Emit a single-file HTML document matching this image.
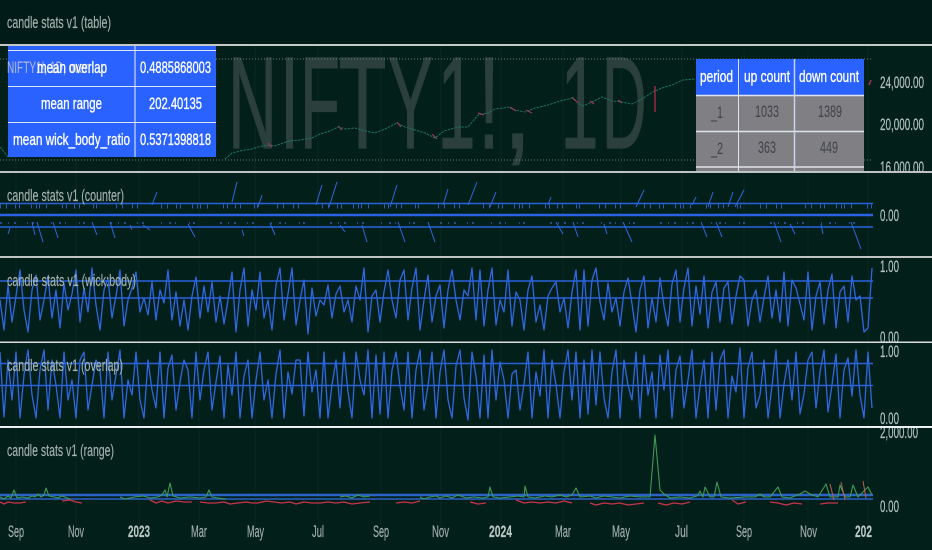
<!DOCTYPE html>
<html><head><meta charset="utf-8"><style>
html,body{margin:0;padding:0;background:#021d19;width:932px;height:550px;overflow:hidden}
svg{display:block}
text{font-family:"Liberation Sans",sans-serif;font-size:16.5px}
.t{fill:#a6b2ae;stroke:#a6b2ae;stroke-width:.15}
.a{fill:#b4c3bf;stroke:#b4c3bf;stroke-width:.2}
.w{fill:#fff;stroke:#fff;stroke-width:.35}
.g{fill:#3f4247}
.b{fill:none;stroke:#2a62dc;stroke-width:1.6}
.c{fill:none;stroke:#2f68e0;stroke-width:1.3;stroke-linejoin:round}
.v{stroke:#0a2722;stroke-width:1}
.m text{font-size:131px;fill:#2b3f3c;stroke:#2b3f3c;stroke-width:1.2}
</style></head><body>
<svg width="932" height="550" viewBox="0 0 932 550" xmlns="http://www.w3.org/2000/svg">
<rect width="932" height="550" fill="#021f1a"/>
<path class="v" d="M16 46V530M76 46V530M139 46V530M199 46V530M255 46V530M318 46V530M381 46V530M441 46V530M501 46V530M563 46V530M621 46V530M682 46V530M744 46V530M808 46V530M868 46V530"/>

<!-- main pane -->
<g class="m">
<text x="228" y="148" textLength="49" lengthAdjust="spacingAndGlyphs">N</text>
<text x="280" y="148" textLength="19" lengthAdjust="spacingAndGlyphs">I</text>
<text x="300" y="148" textLength="40" lengthAdjust="spacingAndGlyphs">F</text>
<text x="338.5" y="148" textLength="48" lengthAdjust="spacingAndGlyphs">T</text>
<text x="388" y="148" textLength="45" lengthAdjust="spacingAndGlyphs">Y</text>
<text x="437.5" y="148" textLength="38" lengthAdjust="spacingAndGlyphs">1</text>
<text x="478" y="148" textLength="22" lengthAdjust="spacingAndGlyphs">!</text>
<text x="503" y="148" textLength="29" lengthAdjust="spacingAndGlyphs">,</text>
<text x="560.5" y="148" textLength="38" lengthAdjust="spacingAndGlyphs">1</text>
<text x="602" y="148" textLength="44.5" lengthAdjust="spacingAndGlyphs">D</text>
</g>
<path d="M0 59H873M0 160H873" stroke="#6a7e79" stroke-width="1" stroke-dasharray="1 2" fill="none"/>
<path d="M0 147L8 157M225 159L232 153 240 151 245 150 252 149 258 147 268 145 275 146 283 143 290 141 300 140 312 138 320 134 330 131 338 127 346 129 355 128 365 131 375 133 385 129 397 123 405 127 415 130 425 133 435 138 444 131 458 127 468 127 478 115 488 113 495 109 503 108 508 107 515 110 525 112 535 108 548 105 560 101 572 98 578 103 583 106 592 102 602 97 612 101 622 102 632 104 642 99 653 92 662 88 672 85 683 80 695 79" fill="none" stroke="#1f7160" stroke-width="1" stroke-dasharray="2.5 1"/>
<path d="M268 143L272 147M338 126L342 130M397 122L401 127M432 134L437 139M478 113L484 115M510 107L516 111M526 110L532 113M572 97L578 103M590 101L594 104M618 100L622 103" fill="none" stroke="#9a3a50" stroke-width="1.2"/>
<path d="M655 86V112" stroke="#b02a48" stroke-width="1.3"/>
<path d="M869 85L871 80" stroke="#a03a50" stroke-width="1.5"/>

<!-- left table -->
<rect x="8" y="46" width="208" height="111" fill="#2962ff"/>
<path d="M8 50.5H216M8 86.5H216M8 122.5H216M135 46V157" stroke="#dbe5f7" stroke-width="1.1" fill="none"/>
<text x="7" y="73" textLength="81" lengthAdjust="spacingAndGlyphs" fill="#b4bcd0">NIFTY1!, 1D, over</text>
<text class="w" x="37" y="73" textLength="70" lengthAdjust="spacingAndGlyphs">mean overlap</text>
<text class="w" x="140" y="73" textLength="71" lengthAdjust="spacingAndGlyphs">0.4885868003</text>
<text class="w" x="41" y="109" textLength="61" lengthAdjust="spacingAndGlyphs">mean range</text>
<text class="w" x="149" y="109" textLength="53" lengthAdjust="spacingAndGlyphs">202.40135</text>
<text class="w" x="13" y="145" textLength="117" lengthAdjust="spacingAndGlyphs">mean wick_body_ratio</text>
<text class="w" x="140" y="145" textLength="71" lengthAdjust="spacingAndGlyphs">0.5371398818</text>

<!-- right table -->
<rect x="696" y="59" width="168" height="36" fill="#2962ff"/>
<rect x="696" y="95" width="168" height="77" fill="#808084"/>
<path d="M696 95.5H864M696 131.5H864M696 167H864" stroke="#dfe3ea" stroke-width="1.5" fill="none"/>
<path d="M738.5 59V172" stroke="#dde4f0" stroke-width="1"/>
<path d="M794.5 59V172" stroke="#c8d4ea" stroke-width="1.5"/>
<text class="w" x="700" y="82" textLength="33" lengthAdjust="spacingAndGlyphs">period</text>
<text class="w" x="744" y="82" textLength="46" lengthAdjust="spacingAndGlyphs">up count</text>
<text class="w" x="799" y="82" textLength="60" lengthAdjust="spacingAndGlyphs">down count</text>
<text class="g" x="711" y="118" textLength="12" lengthAdjust="spacingAndGlyphs">_1</text>
<text class="g" x="755" y="117" textLength="24" lengthAdjust="spacingAndGlyphs">1033</text>
<text class="g" x="818" y="117" textLength="24" lengthAdjust="spacingAndGlyphs">1389</text>
<text class="g" x="711" y="154" textLength="12" lengthAdjust="spacingAndGlyphs">_2</text>
<text class="g" x="758" y="153" textLength="18" lengthAdjust="spacingAndGlyphs">363</text>
<text class="g" x="820" y="153" textLength="18" lengthAdjust="spacingAndGlyphs">449</text>

<text class="a" x="880" y="88" textLength="44" lengthAdjust="spacingAndGlyphs">24,000.00</text>
<text class="a" x="880" y="130" textLength="44" lengthAdjust="spacingAndGlyphs">20,000.00</text>
<text class="a" x="880" y="173" textLength="44" lengthAdjust="spacingAndGlyphs">16,000.00</text>

<!-- counter pane -->
<rect y="172" width="932" height="85" fill="#021f1a"/>
<path class="v" d="M16 173V257M76 173V257M139 173V257M199 173V257M255 173V257M318 173V257M381 173V257M441 173V257M501 173V257M563 173V257M621 173V257M682 173V257M744 173V257M808 173V257M868 173V257"/>
<path d="M0 203.5H873M0 227H873" class="b"/>
<path d="M0 215H873" fill="none" stroke="#2a62e4" stroke-width="2.6"/>
<path d="M0 206.5H873" fill="none" stroke="#2f5cb4" stroke-width="4" stroke-dasharray="1 5 1 8 1 3 1 11 1 4 1 2 1 6 1 15 1 3 1 7 1 4 1 13 1 2 1 19 1 5 1 9 1 4 1 23"/>
<path d="M0 223H873" fill="none" stroke="#2f5cb4" stroke-width="1.4" stroke-dasharray="2 6 1 5 2 11 1 4 2 17 1 7 2 4 1 13 1 3 2 25"/>
<path class="c" style="stroke-width:1" d="M237 182L232 202M157 192L152 205M262 195L258 207M322 185L316 205M337 182L329 207M397 185L390 207M448 189L443 205M477 182L468 205M496 192L490 207M551 197L548 205M644 190L636 207M713 192L708 207M733 192L728 207M744 190L735 207M696 197L692 205M10 228L8 234M32 222L35 235M37 222L43 242M53 222L58 238M92 222L97 235M110 222L115 238M130 225L132 230M143 225L150 230M188 224L195 237M242 230L244 236M270 223L275 235M340 225L345 232M362 225L367 242M398 222L405 242M428 222L435 242M556 222L563 234M573 222L578 237M604 224L607 234M623 222L632 242M701 222L707 237M716 222L722 237M774 222L781 242M790 224L795 234M821 224L823 234M851 222L861 249"/>
<text class="a" x="880" y="221" textLength="19" lengthAdjust="spacingAndGlyphs">0.00</text>

<!-- wick pane -->
<path class="c" d="M0 300L4 330 8 285 12 322 16 296 20 270 24 310 28 332 32 290 36 275 40 320 44 300 48 276 52 318 56 290 60 328 64 283 68 310 72 294 76 270 80 322 84 288 88 312 92 268 96 305 100 330 104 290 108 278 112 318 116 296 120 270 124 326 128 300 132 288 136 272 140 312 144 298 148 315 152 282 156 320 160 290 164 303 168 270 172 320 176 292 180 326 184 300 188 330 192 296 196 277 200 318 204 286 208 312 212 282 216 322 220 296 224 324 228 300 232 272 236 332 240 290 244 268 248 326 252 290 256 310 260 272 264 318 268 300 272 330 276 285 280 268 284 320 288 294 292 268 296 325 300 300 304 280 308 334 312 288 316 316 320 300 324 305 328 285 332 318 336 294 340 286 344 312 348 300 352 322 356 286 360 300 364 268 368 332 372 296 376 290 380 322 384 292 388 270 392 300 396 318 400 280 404 270 408 320 412 288 416 268 420 330 424 300 428 275 432 322 436 296 440 285 444 328 448 290 452 270 456 300 460 320 464 290 468 296 472 268 476 320 480 270 484 326 488 290 492 268 496 325 500 300 504 312 508 270 512 326 516 292 520 300 524 330 528 290 532 276 536 322 540 305 544 330 548 296 552 288 556 282 560 312 564 298 568 328 572 292 576 270 580 330 584 270 588 326 592 280 596 268 600 302 604 320 608 283 612 312 616 298 620 326 624 292 628 278 632 304 636 332 640 290 644 276 648 328 652 298 656 322 660 278 664 306 668 326 672 284 676 270 680 322 684 288 688 268 692 326 696 286 700 314 704 276 708 328 712 292 716 282 720 322 724 288 728 282 732 324 736 296 740 276 744 280 748 326 752 300 756 290 760 322 764 298 768 276 772 318 776 290 780 322 784 272 788 326 792 280 796 288 800 304 804 320 808 272 812 330 816 296 820 282 824 324 828 290 832 274 836 328 840 292 844 286 848 322 852 276 856 300 860 296 864 332 868 328 872 268"/>
<path class="b" d="M0 281H873M0 298H873"/>
<text class="a" x="880" y="272" textLength="19" lengthAdjust="spacingAndGlyphs">1.00</text>
<text class="a" x="880" y="343" textLength="19" lengthAdjust="spacingAndGlyphs">0.00</text>

<!-- overlap pane -->
<path class="c" d="M0 352L4 417 8 360 12 400 16 352 20 418 24 375 28 350 32 395 36 418 40 370 44 350 48 410 52 360 56 385 60 418 64 352 68 400 72 380 76 418 80 360 84 352 88 410 92 385 96 360 100 370 104 418 108 352 112 400 116 375 120 350 124 418 128 380 132 395 136 352 140 400 144 418 148 360 152 390 156 408 160 352 164 418 168 368 172 355 176 410 180 382 184 360 188 370 192 418 196 352 200 400 204 370 208 352 212 410 216 382 220 356 224 418 228 365 232 395 236 352 240 418 244 376 248 360 252 418 256 380 260 352 264 400 268 380 272 418 276 374 280 350 284 418 288 372 292 394 296 360 300 360 304 416 308 352 312 392 316 370 320 418 324 352 328 418 332 385 336 360 340 408 344 352 348 392 352 418 356 352 360 380 364 395 368 350 372 418 376 355 380 414 384 352 388 418 392 370 396 352 400 386 404 410 408 352 412 418 416 370 420 350 424 410 428 386 432 352 436 418 440 372 444 350 448 400 452 418 456 366 460 350 464 398 468 420 472 352 476 376 480 418 484 355 488 418 492 350 496 400 500 362 504 380 508 418 512 374 516 370 520 410 524 384 528 352 532 418 536 372 540 396 544 350 548 418 552 360 556 385 560 418 564 372 568 350 572 400 576 352 580 418 584 360 588 414 592 350 596 405 600 352 604 398 608 418 612 372 616 350 620 418 624 360 628 385 632 400 636 352 640 418 644 355 648 395 652 372 656 418 660 355 664 390 668 350 672 418 676 370 680 356 684 408 688 380 692 350 696 418 700 386 704 360 708 418 712 352 716 410 720 360 724 350 728 418 732 376 736 392 740 348 744 418 748 368 752 352 756 408 760 395 764 360 768 418 772 386 776 350 780 418 784 384 788 360 792 400 796 352 800 414 804 394 808 360 812 352 816 408 820 372 824 350 828 412 832 385 836 354 840 418 844 370 848 358 852 396 856 350 860 395 864 418 868 352 872 408"/>
<path class="b" d="M0 363.5H873M0 385.5H873"/>
<text class="a" x="880" y="357" textLength="19" lengthAdjust="spacingAndGlyphs">1.00</text>
<text class="a" x="880" y="424" textLength="19" lengthAdjust="spacingAndGlyphs">0.00</text>

<!-- range pane -->
<path d="M0 495H873" fill="none" stroke="#2a62c8" stroke-width="2.4"/>
<path d="M0 499H873" fill="none" stroke="#2a62c8" stroke-width="1.5"/>
<path d="M0 497L4 499 8 496 11 498 14 490 17 498 22 497 28 498 32 496 35 497 38 494 41 497 44 495 46 488 49 496 54 497 58 498 62 496 70 499M120 497L125 499 135 497 143 496 150 498 158 497 162 495 165 490 167 497 170 483 173 496 180 498 190 497 200 498 206 497 209 490 212 497 218 498 226 499M340 497L346 496 352 498 358 495 364 497 370 496M420 497L424 499 430 497 436 496 440 498 446 496 452 498 458 495 466 498 474 497 482 498 488 497 490 487 493 497 500 498 510 497 518 496 524 497 525 486 528 497 535 498 545 496 552 497 560 495 566 497 572 495 576 488 580 497 590 496 596 498 604 496 612 497 620 498 630 496 640 497 650 497 655 435 660 490 664 494 670 498 680 497 690 498 697 496 700 491 703 497 705 487 710 497 714 497 717 482 721 497 730 498 745 497 755 497 760 494 764 497 770 497 778 487 782 497 790 498 800 494 805 491 810 494 818 497 826 484 830 497 838 497 840 485 845 497 850 497 853 485 858 497 868 487 872 495" fill="none" stroke="#3f9a55" stroke-width="1.1" stroke-linejoin="round"/>
<path d="M0 502L4 504 8 502 14 503 20 503 26 502M70 500L76 502 82 503 M150 500L156 503 162 501 168 503 176 501 184 502 192 502M62 501L70 500M200 502L208 503 216 503 224 502 230 504 238 503 246 502 252 503 258 503 266 501 274 502 282 503 290 502 296 504 304 502 312 503 320 503 328 502 336 503 344 502 352 504 360 503 370 502M396 503L404 502 412 503 420 501M470 502L478 504 486 503 M516 500L524 503 532 502 540 503 548 502 556 503 564 501 572 503M590 503L596 505 604 503 612 504 620 503 628 505 636 504 644 503 M658 503L666 505 674 503 682 504 690 502M732 500L738 504 746 502M770 502L778 503 786 505 794 503 802 504 M820 504L828 503 838 503 M883 0" fill="none" stroke="#c8344c" stroke-width="1.3" stroke-linejoin="round"/>
<path d="M830 484L834 500M841 482L845 500M863 481L866 498" fill="none" stroke="#b86050" stroke-width="1"/>
<text class="a" x="880" y="438" textLength="38" lengthAdjust="spacingAndGlyphs">2,000.00</text>
<text class="a" x="880" y="512" textLength="19" lengthAdjust="spacingAndGlyphs">0.00</text>

<!-- separators & top band repaint -->
<rect y="0" width="932" height="44" fill="#011c18"/>
<rect y="44" width="932" height="2" fill="#c4c8c6"/>
<rect y="171" width="932" height="2" fill="#bfc3c1"/>
<rect y="256" width="932" height="2" fill="#bfc3c1"/>
<rect y="341.5" width="932" height="1.5" fill="#d8dbda"/>
<rect y="426" width="932" height="2" fill="#eef0ef"/>

<!-- legends -->
<text class="t" x="7" y="28" textLength="104" lengthAdjust="spacingAndGlyphs">candle stats v1 (table)</text>
<text class="t" x="7" y="201" textLength="117" lengthAdjust="spacingAndGlyphs">candle stats v1 (counter)</text>
<text class="t" x="7" y="286" textLength="129" lengthAdjust="spacingAndGlyphs">candle stats v1 (wick:body)</text>
<text class="t" x="7" y="371" textLength="116" lengthAdjust="spacingAndGlyphs">candle stats v1 (overlap)</text>
<text class="t" x="7" y="456" textLength="107" lengthAdjust="spacingAndGlyphs">candle stats v1 (range)</text>

<!-- time axis -->
<g class="t">
<text x="8" y="537" textLength="16" lengthAdjust="spacingAndGlyphs">Sep</text>
<text x="68" y="537" textLength="16" lengthAdjust="spacingAndGlyphs">Nov</text>
<text x="128" y="537" textLength="22" lengthAdjust="spacingAndGlyphs" style="font-weight:bold;fill:#c0ccc8">2023</text>
<text x="191" y="537" textLength="16" lengthAdjust="spacingAndGlyphs">Mar</text>
<text x="247" y="537" textLength="17" lengthAdjust="spacingAndGlyphs">May</text>
<text x="312" y="537" textLength="12" lengthAdjust="spacingAndGlyphs">Jul</text>
<text x="373" y="537" textLength="16" lengthAdjust="spacingAndGlyphs">Sep</text>
<text x="432" y="537" textLength="17" lengthAdjust="spacingAndGlyphs">Nov</text>
<text x="489" y="537" textLength="23" lengthAdjust="spacingAndGlyphs" style="font-weight:bold;fill:#c0ccc8">2024</text>
<text x="555" y="537" textLength="16" lengthAdjust="spacingAndGlyphs">Mar</text>
<text x="612" y="537" textLength="18" lengthAdjust="spacingAndGlyphs">May</text>
<text x="675" y="537" textLength="13" lengthAdjust="spacingAndGlyphs">Jul</text>
<text x="736" y="537" textLength="16" lengthAdjust="spacingAndGlyphs">Sep</text>
<text x="800" y="537" textLength="17" lengthAdjust="spacingAndGlyphs">Nov</text>
<text x="855" y="537" textLength="17" lengthAdjust="spacingAndGlyphs" style="font-weight:bold;fill:#c0ccc8">202</text>
</g>
</svg>
</body></html>
